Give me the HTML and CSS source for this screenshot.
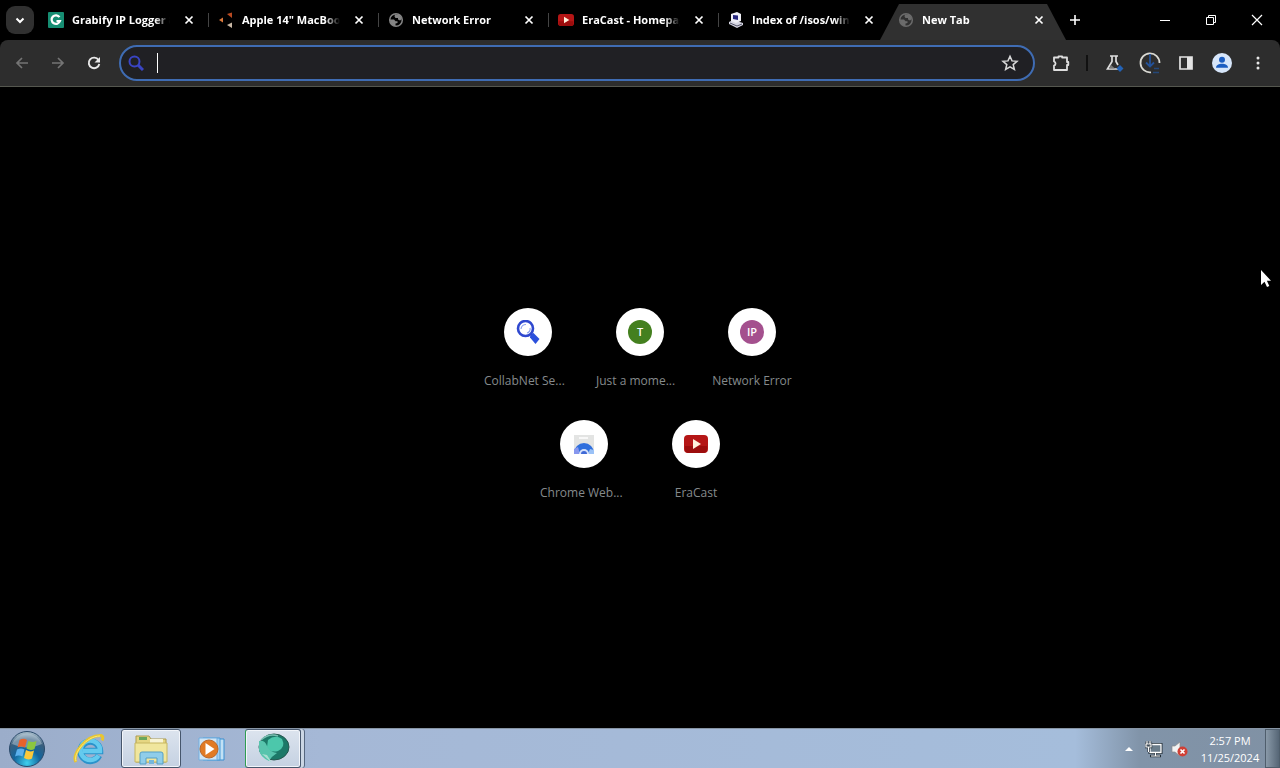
FILE: index.html
```html
<!DOCTYPE html>
<html lang="en">
<head>
<meta charset="utf-8">
<title>New Tab</title>
<link rel="stylesheet" href="styles.css">
</head>
<body>
<svg class="defs" aria-hidden="true">
  <defs>
    <symbol id="x" viewBox="0 0 16 16"><path d="M4.500 4.500l7 7m0-7l-7 7" stroke="#fff" stroke-width="1.700"/></symbol>
    <symbol id="globe" viewBox="0 0 16 16"><circle cx="8" cy="8" r="6.300" fill="none" stroke="currentColor" stroke-width="1.500"/><path d="M2 7.500h4l1.500 1.800h2V11l-2 .5V14C4 14 2 11.500 2 7.500zM7 2.300l5 .7 2 4-2 1.500-2-1V6H7.500L6.500 4.500z" fill="currentColor"/></symbol>
    <symbol id="tube" viewBox="0 0 24 20"><rect y="1" width="24" height="18" rx="4" fill="#b51616"/><path d="M1 12h22v3q0 4-4 4H5q-4 0-4-4z" fill="#9c0d0d"/><path d="M9 5l8 5-8 5z" fill="#fff0dc"/></symbol>
    <symbol id="lens" viewBox="0 0 24 24"><path d="M14.500 14l3-1 6 6-4 5-5.500-6.500z" fill="#2b50dc"/><circle cx="9.500" cy="8.500" r="7.500" fill="none" stroke="#2f48cf" stroke-width="2.600"/><path d="M5 9a5 5 0 0 1 5-4.500M14 8a4 4 0 0 1-3 5" fill="none" stroke="#8da2ee" stroke-width="1.200"/></symbol>
    <symbol id="search" viewBox="0 0 16 16"><circle cx="6.500" cy="6.500" r="5" fill="none" stroke="#3a45c4" stroke-width="2"/><path d="M10 10l5 5" stroke="#3a45c4" stroke-width="3"/></symbol>
  </defs>
</svg>

<header class="tabstrip">
  <button class="search-tabs" aria-label="Search tabs"><svg width="16" height="16" viewBox="0 0 16 16"><path d="M4.500 6.500L8 10l3.500-3.500" fill="none" stroke="#fff" stroke-width="2"/></svg></button>
  <nav class="tabs" aria-label="Tabs">
    <div class="tab">
      <svg class="favicon" viewBox="0 0 16 16"><rect width="16" height="16" rx="1" fill="#168d72"/><path d="M11.500 5.200A4.300 4.300 0 1 0 12 9H8.500" fill="none" stroke="#fff" stroke-width="2.200"/></svg>
      <a class="title" href="#">Grabify IP Logger &amp;</a>
      <button class="close" aria-label="Close tab"><svg><use href="#x"/></svg></button>
    </div>
    <div class="tab">
      <svg class="favicon" viewBox="0 0 16 16"><path d="M1 8l4-2.500v5z" fill="#d8783d"/><path d="M9 2l5-1.500V6z" fill="#b84a22"/><path d="M9 13l5-2.500V16z" fill="#c9b8a5"/></svg>
      <a class="title" href="#">Apple 14" MacBook</a>
      <button class="close" aria-label="Close tab"><svg><use href="#x"/></svg></button>
    </div>
    <div class="tab">
      <svg class="favicon globe"><use href="#globe"/></svg>
      <a class="title" href="#">Network Error</a>
      <button class="close" aria-label="Close tab"><svg><use href="#x"/></svg></button>
    </div>
    <div class="tab">
      <svg class="favicon"><use href="#tube"/></svg>
      <a class="title" href="#">EraCast - Homepage</a>
      <button class="close" aria-label="Close tab"><svg><use href="#x"/></svg></button>
    </div>
    <div class="tab last">
      <svg class="favicon" viewBox="0 0 16 16"><path d="M1 10l4-2 10 3v2l-6 3-8-4z" fill="#d6d6e2"/><path d="M3 2l6-2 4 2v7l-5 2-5-2z" fill="#efeff6"/><path d="M5 3l5 .5V8L5 7z" fill="#26267e"/><path d="M2 11l7 3 5-2" fill="none" stroke="#55556a"/></svg>
      <a class="title" href="#">Index of /isos/wind</a>
      <button class="close" aria-label="Close tab"><svg><use href="#x"/></svg></button>
    </div>
    <div class="tab active">
      <svg class="favicon globe"><use href="#globe"/></svg>
      <a class="title" href="#" aria-current="page">New Tab</a>
      <button class="close" aria-label="Close tab"><svg><use href="#x"/></svg></button>
    </div>
  </nav>
  <button class="new-tab" aria-label="New tab"><svg width="16" height="16" viewBox="0 0 16 16"><path d="M8 3v10M3 8h10" stroke="#fff" stroke-width="1.600"/></svg></button>
  <div class="window-controls">
    <button aria-label="Minimize"><svg width="12" height="12" viewBox="0 0 12 12"><path d="M1 6.500h10" stroke="#fff"/></svg></button>
    <button aria-label="Restore"><svg width="12" height="12" viewBox="0 0 12 12"><path d="M1.500 3.500h7v7h-7zM3.500 3.500v-2h7v7h-2" fill="none" stroke="#fff"/></svg></button>
    <button aria-label="Close window"><svg width="12" height="12" viewBox="0 0 12 12"><path d="M1 1l10 10M11 1L1 11" stroke="#fff" stroke-width="1.200"/></svg></button>
  </div>
</header>

<div class="toolbar">
  <button class="tool" aria-label="Back"><svg width="16" height="16" viewBox="0 0 16 16" fill="none" stroke="#747474" stroke-width="1.700"><path d="M14 8H3M8 3L3 8l5 5"/></svg></button>
  <button class="tool" aria-label="Forward"><svg width="16" height="16" viewBox="0 0 16 16" fill="none" stroke="#747474" stroke-width="1.700"><path d="M2 8h11M8 3l5 5-5 5"/></svg></button>
  <button class="tool" aria-label="Reload"><svg width="16" height="16" viewBox="0 0 16 16"><path d="M12.500 5A5.300 5.300 0 1 0 13.300 9" fill="none" stroke="#e8e8e8" stroke-width="1.900"/><path d="M14 2v5.500H8.500z" fill="#e8e8e8"/></svg></button>
  <div class="omnibox">
    <span class="engine"><svg width="16" height="16"><use href="#search"/></svg></span>
    <span class="caret"></span>
    <input type="text" aria-label="Address and search bar">
    <button class="star" aria-label="Bookmark this tab"><svg width="18" height="18" viewBox="0 0 18 18"><path d="M9 2.300l2 4.600 5 .4-3.800 3.300 1.200 4.900L9 12.900l-4.400 2.600 1.200-4.900L2 7.300l5-.4z" fill="none" stroke="#d9d9d9" stroke-width="1.500"/></svg></button>
  </div>
  <button class="tool extensions" aria-label="Extensions"><svg width="20" height="20" viewBox="0 0 20 20"><path d="M3 4.500h4.500V3.300h3.600v1.200H16V9h1.300v3H16v5H3v-4.300a2.200 2.200 0 0 0 0-4.200z" fill="none" stroke="#dedede" stroke-width="1.800" stroke-linejoin="round"/></svg></button>
  <span class="divider"></span>
  <button class="tool" aria-label="Experiments"><svg width="20" height="20" viewBox="0 0 20 20"><path d="M6 3h8M8 3v5.500L3.500 16h11M12 3v5.500l2 3.500" fill="none" stroke="#dedede" stroke-width="1.700"/><path d="M7 12l-2 3.500h6z" fill="#777"/><path d="M16 12l3.500 3.500L16 19l-3.500-3.500z" fill="#2362b5"/></svg></button>
  <button class="tool" aria-label="Downloads"><svg width="22" height="22" viewBox="0 0 22 22" fill="none"><path d="M12 20.300A9.500 9.500 0 1 1 20.500 11" stroke="#d9d9d3" stroke-width="1.800"/><path d="M11 2v12M7 10.500l4 4 4-4" stroke="#245298" stroke-width="1.800"/><path d="M14 20.500h6M15 16.500h5" stroke="#244778" stroke-width="1.500"/></svg></button>
  <button class="tool" aria-label="Side panel"><svg width="18" height="18" viewBox="0 0 18 18"><path d="M3 3h12v12H3z" fill="none" stroke="#e4e4e4" stroke-width="1.700"/><path d="M10 3h5v12h-5z" fill="#e4e4e4"/></svg></button>
  <button class="tool" aria-label="Profile"><svg width="20" height="20" viewBox="0 0 20 20"><circle cx="10" cy="10" r="10" fill="#d7e6fa"/><circle cx="10" cy="6.800" r="3" fill="#1b5dc1"/><path d="M4 14.800c0-2.700 3-4 6-4s6 1.300 6 4z" fill="#1b5dc1"/></svg></button>
  <button class="tool" aria-label="Menu"><svg width="16" height="16" viewBox="0 0 16 16" fill="#e8e8e8"><circle cx="8" cy="3" r="1.500"/><circle cx="8" cy="8" r="1.500"/><circle cx="8" cy="13" r="1.500"/></svg></button>
</div>

<main class="page">
  <div class="tiles">
    <a class="tile" href="#"><span class="disc"><svg width="24" height="24"><use href="#lens"/></svg></span><span class="label cut">CollabNet Se...</span></a>
    <a class="tile" href="#"><span class="disc"><span class="badge green">T</span></span><span class="label cut">Just a mome...</span></a>
    <a class="tile" href="#"><span class="disc"><span class="badge purple">IP</span></span><span class="label">Network Error</span></a>
    <a class="tile" href="#"><span class="disc"><svg width="24" height="24" viewBox="0 0 24 24"><path d="M2 3h20v18H2z" fill="#e3e4e3"/><path d="M7 6h9" stroke="#f8f8f8" stroke-width="2"/><path d="M2 21a10 10 0 0 1 20 0z" fill="#2f6fdd"/><path d="M2 22v-5l4-2 2 7z" fill="#8797ee"/><path d="M22 22v-4l-4-1-2 5z" fill="#9bc2f7"/><path d="M7 22a5 5 0 0 1 10 0z" fill="#d4e0fa"/><path d="M9 22a3 3 0 0 1 6 0z" fill="#3f69d6"/></svg></span><span class="label cut">Chrome Web...</span></a>
    <a class="tile" href="#"><span class="disc"><svg width="24" height="20"><use href="#tube"/></svg></span><span class="label">EraCast</span></a>
  </div>
</main>

<footer class="taskbar">
  <button class="start" aria-label="Start">
    <svg width="38" height="38" viewBox="0 0 38 38">
      <defs><radialGradient id="orb" cx=".5" cy=".9" r=".85"><stop offset="0" stop-color="#3fd0ee"/><stop offset=".45" stop-color="#12659d"/><stop offset=".8" stop-color="#3b5f7d"/><stop offset="1" stop-color="#9db4c4"/></radialGradient></defs>
      <circle cx="19" cy="19" r="17.500" fill="url(#orb)" stroke="#2a4a6b"/>
      <path d="M4 14a16 16 0 0 1 30 0q-15 7-30 0z" fill="#c7d8e3" opacity=".45"/>
      <path d="M11.500 10q4-2.500 7.500 0l-2 7.500q-4-2-7.500 0z" fill="#e8622c"/><path d="M20.500 11q4 2 8 0l-2 8q-4 2-8-.5z" fill="#8cc63f"/><path d="M9 19.500q4-2 7.500 0l-2 7q-4-2-7.500 0z" fill="#5bb0ec"/><path d="M18 20q4 2.500 8 .5l-2 8q-4 2-8-.5z" fill="#fbc93a"/>
    </svg>
  </button>
  <button class="task ie" aria-label="Internet Explorer">
    <svg width="34" height="34" viewBox="0 0 34 34"><path d="M27 23.500A9.700 9.700 0 1 1 28 19H11" fill="none" stroke="#2a93cb" stroke-width="6.500"/><path d="M26.500 23.500A9.700 9.700 0 1 1 28 19H11" fill="none" stroke="#64caee" stroke-width="4.500"/><path d="M4 30C-1 23 14 3 29 3.500q3 1 1 5" fill="none" stroke="#e9c52f" stroke-width="3"/><path d="M4 29C1 22 14 4 28 4" fill="none" stroke="#f8ea7c"/></svg>
  </button>
  <button class="task open" aria-label="Windows Explorer">
    <svg width="36" height="34" viewBox="0 0 36 34"><path d="M3 4h13l2 3h15v23H3z" fill="#e5d682" stroke="#ad9b50"/><path d="M6 5h8v3H6z" fill="#69a65b"/><path d="M17 7h13v4H17z" fill="#f8f4d5"/><path d="M2 11h32v19H2z" fill="#f0e69d" stroke="#c6b660"/><path d="M7 32V22q0-2 2-2h19q2 0 2 2v10h-6v-6H13v6z" fill="#8fcdea" stroke="#559fc6"/><path d="M16 28h5v4h-5z" fill="#75b7dc"/></svg>
  </button>
  <button class="task media" aria-label="Windows Media Player">
    <svg width="30" height="30" viewBox="0 0 30 30"><path d="M10 5h17v21H10z" fill="#c2e1f5" stroke="#3b8fd1"/><path d="M6 4h17v22H6z" fill="#a6cff0" stroke="#4b9cd8"/><path d="M2 4h18v22H2z" fill="#d0e5f5" stroke="#70afe0"/><circle cx="12" cy="15" r="9" fill="#e17a24" stroke="#b9672b"/><path d="M8.500 9l9 6-9 6z" fill="#fff"/></svg>
  </button>
  <button class="task open stacked" aria-label="Browser">
    <svg width="34" height="34" viewBox="0 0 34 34"><ellipse cx="18" cy="15" rx="15" ry="13" fill="#1c7968" stroke="#27574f"/><path d="M12 8q7-6 14-1 4 8-4 12-8 2-11-4z" fill="#4cc7ab"/><path d="M3 9q6-1 8 5 3 6 10 7-5 3-8 8Q4 25 3 18z" fill="#58c4ad"/><path d="M6 22l10 9-5-8z" fill="#a9dfd1"/><path d="M5 8q8-7 17-4" stroke="#79bfb2" fill="none" stroke-width="1.500"/></svg>
  </button>
  <div class="tray">
    <button aria-label="Show hidden icons"><svg width="10" height="6" viewBox="0 0 10 6"><path d="M1 5l4-4 4 4z" fill="#fff"/></svg></button>
    <button aria-label="Network"><svg width="18" height="18" viewBox="0 0 18 18"><path d="M5 4.500h11v8H5z" fill="#6b7d8b" stroke="#202c36" stroke-width="3"/><path d="M5 4.500h11v8H5z" fill="#6b7d8b" stroke="#fff" stroke-width="1.300"/><path d="M5 16h11M10.500 13v3M2 1v3M5 1v3M1 4h5v3H1zM3.500 7v5" fill="none" stroke="#202c36" stroke-width="2.400"/><path d="M6 16h9M10.500 13v3M2 1v3M5 1v3M1 4h5v3H1zM3.500 7v5" fill="none" stroke="#fff" stroke-width="1.200"/></svg></button>
    <button aria-label="Volume muted"><svg width="18" height="18" viewBox="0 0 18 18"><path d="M2 6h3l5-4v14l-5-4H2z" fill="#f3f3f3" stroke="#8b8b8b" stroke-width=".7"/><circle cx="12.500" cy="11.500" r="5" fill="#cf3f35"/><path d="M10.500 9.500l4 4m0-4l-4 4" stroke="#fff" stroke-width="1.600"/></svg></button>
    <button class="clock"><time>2:57 PM</time><time>11/25/2024</time></button>
  </div>
  <button class="show-desktop" aria-label="Show desktop"></button>
</footer>

<svg class="cursor" aria-hidden="true" width="12" height="19" viewBox="0 0 12 19"><path d="M1 1v15l3.500-3.200L7 18l2.300-1-2.400-5.200H11z" fill="#fff"/></svg>
</body>
</html>
```

FILE: styles.css
```css
* { box-sizing: border-box; }

body {
  margin: 0;
  height: 100vh;
  display: flex;
  flex-direction: column;
  overflow: hidden;
  position: relative;
  background: #000;
  color: #fff;
  font-family: "Open Sans", "Noto Sans", sans-serif;
  font-size: 12px;
}

button {
  display: flex;
  align-items: center;
  justify-content: center;
  flex: none;
  padding: 0;
  border: 0;
  background: none;
  color: inherit;
  font: inherit;
}

a { color: inherit; text-decoration: none; }
svg { flex: none; }
.defs { position: absolute; width: 0; height: 0; }

/* Tab strip */
.tabstrip {
  display: flex;
  align-items: center;
  height: 40px;
  flex: none;
}

.search-tabs {
  width: 28px;
  height: 28px;
  margin: 0 6px;
  border-radius: 9px;
  background: #303030;
}

.tabs { display: flex; height: 100%; min-width: 0; }

.tab {
  position: relative;
  display: flex;
  align-items: center;
  width: 170px;
  padding: 0 13px 0 8px;
}

.tab:not(.last):not(.active)::after {
  content: "";
  position: absolute;
  right: 1px;
  top: 13px;
  width: 1px;
  height: 14px;
  background: #444;
}

.favicon { width: 16px; height: 16px; margin-right: 8px; }
.globe { color: #858585; }

.title {
  flex: 1;
  min-width: 0;
  margin-right: 8px;
  overflow: hidden;
  white-space: nowrap;
  font-size: 11px;
  font-weight: 700;
  line-height: 20px;
  mask-image: linear-gradient(to right, #000 82%, transparent 97%);
}

.close, .close svg { width: 16px; height: 16px; }

.active { z-index: 0; }

.active::before {
  content: "";
  position: absolute;
  z-index: -1;
  inset: 4px -6px 0 -10px;
  background: #303030;
  clip-path: polygon(0 100%, 19px 0, calc(100% - 19px) 0, 100% 100%);
}

.active .globe { color: #6b6b6b; }

.new-tab { width: 24px; height: 24px; margin-left: 3px; }

.window-controls { display: flex; margin-left: auto; }
.window-controls button { width: 46px; height: 40px; }

/* Toolbar */
.toolbar {
  display: flex;
  align-items: center;
  flex: none;
  height: 47px;
  padding: 0 4px;
  background: #2d2d2d;
  border-bottom: 1px solid #55574f;
  border-radius: 8px 8px 0 0;
}

.tool { width: 36px; height: 36px; }

.omnibox {
  display: flex;
  align-items: center;
  flex: 1;
  min-width: 0;
  height: 36px;
  margin: 0 8px 0 7px;
  padding: 0 14px 0 5px;
  border: 2px solid #3f6cb3;
  border-radius: 18px;
  background: #202024;
}

.engine {
  display: flex;
  align-items: center;
  justify-content: center;
  width: 20px;
  height: 24px;
}

.caret { width: 1px; height: 20px; margin-left: 11px; background: #fff; }

.omnibox input {
  flex: 1;
  min-width: 0;
  border: 0;
  outline: 0;
  background: none;
  color: #fff;
  font: inherit;
}

.divider { width: 2px; height: 16px; margin: 0 8px 0 7px; background: #111; }

/* New tab page */
.page {
  display: flex;
  flex: 1;
  align-items: center;
  justify-content: center;
  padding-bottom: 7px;
}

.tiles {
  display: flex;
  flex-wrap: wrap;
  justify-content: center;
  width: 336px;
}

.tile {
  display: flex;
  flex-direction: column;
  align-items: center;
  gap: 15px;
  width: 112px;
  height: 112px;
  padding-top: 16px;
}

.disc {
  display: flex;
  align-items: center;
  justify-content: center;
  width: 48px;
  height: 48px;
  border-radius: 50%;
  background: #fff;
}

.badge {
  width: 24px;
  height: 24px;
  border-radius: 50%;
  font-size: 11px;
  font-weight: 600;
  line-height: 24px;
  text-align: center;
}

.green { background: #44801f; }
.purple { background: #a4508e; }

.label {
  width: 88px;
  color: #858a8c;
  line-height: 20px;
  text-align: center;
  white-space: nowrap;
}

.cut { text-align: left; }

/* Taskbar */
.taskbar {
  display: flex;
  flex: none;
  height: 40px;
  border-top: 1px solid #8795a5;
  background: linear-gradient(to right, #9badca, #a5b8d6 25%, #a5bddb 84%, #8194a9 89%, #8091a4);
}

.start { width: 54px; }
.task { width: 60px; border: 1px solid transparent; border-radius: 3px; }
.ie { margin-left: 5px; }
.open { margin-left: 2px; border-color: #46566c; background: linear-gradient(#dce4ee, #c5d1e2); box-shadow: inset 0 0 0 1px #f2f5fa; }
.media { margin-left: 1px; }
.stacked { width: 56px; margin-left: 3px; border-left-color: #2f9d52; box-shadow: inset 0 0 0 1px #f2f5fa, 3px 0 0 #cbd6e4, 4px 0 0 #56677f; }

.tray { display: flex; align-items: center; gap: 7px; margin-left: auto; }
.tray button:first-child { margin-right: 4px; }

.clock {
  flex-direction: column;
  width: 70px;
  font-size: 11px;
  line-height: 17px;
}

.show-desktop {
  width: 15px;
  border: 1px solid #4f5e6c;
  background: linear-gradient(to right, #8999a8, #566676);
}

.cursor { position: absolute; left: 1260px; top: 269px; }
```
